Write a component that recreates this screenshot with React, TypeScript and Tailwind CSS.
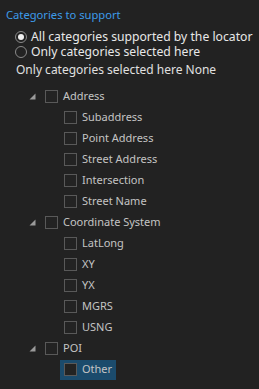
import React from "react";

type Node = { label: string; children?: string[] };

const tree: Node[] = [
  { label: "Address", children: ["Subaddress", "Point Address", "Street Address", "Intersection", "Street Name"] },
  { label: "Coordinate System", children: ["LatLong", "XY", "YX", "MGRS", "USNG"] },
  { label: "POI", children: ["Other"] },
];

const Box = () => (
  <span className="block w-[13px] h-[13px] border border-[#595959] bg-[#232323] shrink-0" />
);

const Radio = ({ checked }: { checked?: boolean }) => (
  <span className="flex items-center justify-center w-[12px] h-[12px] rounded-full border border-[#8a8a8a] shrink-0">
    {checked && <span className="block w-[6px] h-[6px] rounded-full bg-[#f0f0f0]" />}
  </span>
);

const Expander = () => (
  <svg width="7" height="7" viewBox="0 0 7 7" className="shrink-0">
    <polygon points="6.5,0.5 6.5,6.5 0.5,6.5" fill="#9a9a9a" />
  </svg>
);

export default function App() {
  return (
    <div
      className="w-[259px] h-[389px] bg-[#222222] overflow-hidden text-[12px]"
      style={{ fontFamily: "'Noto Sans', 'Open Sans', sans-serif" }}
    >
      <div className="pl-[6px] pt-[5px] h-[25px] leading-[20px] text-[11.2px] text-[#3d9be9]">Categories to support</div>

      <div className="mt-[4px] pl-[15px] text-[12.2px] leading-[14px] text-[#e8e8e8]">
        <div className="flex items-center gap-[4px] h-[15px]">
          <Radio checked />
          <span>All categories supported by the locator</span>
        </div>
        <div className="flex items-center gap-[4px] h-[15px]">
          <Radio />
          <span>Only categories selected here</span>
        </div>
      </div>

      <div className="mt-[2px] pl-[16px] h-[18px] leading-[18px] text-[#e0e0e0]">
        Only categories selected here None
      </div>

      <div className="mt-[7px] text-[11px] text-[#c4c4c4]">
        {tree.map((node) => (
          <div key={node.label}>
            <div className="flex items-center h-[21px] pl-[29px]">
              <Expander />
              <span className="ml-[9px]"><Box /></span>
              <span className="ml-[5px]">{node.label}</span>
            </div>
            {node.children?.map((c) => (
              <div key={c} className="flex items-center h-[21px] pl-[60px]">
                <div
                  className={
                    "flex items-center h-[20px] pl-[4px] pr-[4px] " +
                    (c === "Other" ? "bg-[#1b4b6c]" : "")
                  }
                >
                  <Box />
                  <span className="ml-[5px]">{c}</span>
                </div>
              </div>
            ))}
          </div>
        ))}
      </div>
    </div>
  );
}
